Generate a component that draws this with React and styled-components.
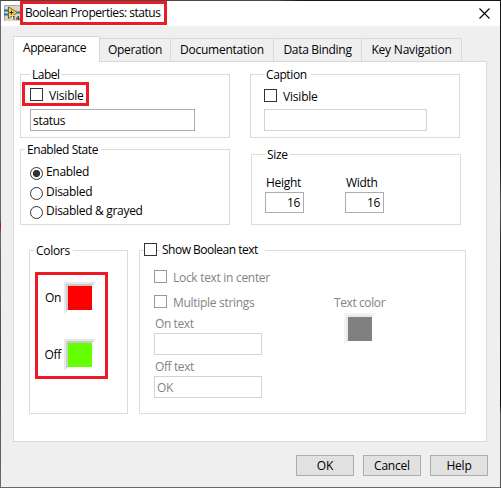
import React, { useState } from 'react';
import styled, { createGlobalStyle } from 'styled-components';

const GlobalStyle = createGlobalStyle`
  * {
    box-sizing: border-box;
  }

  body {
    margin: 0;
    font: 12px/16px "Open Sans", "Noto Sans", sans-serif;
    color: #000;
  }
`;

// the 1px padding lets the dark desktop show round the dialog
const Desktop = styled.div`
  width: 501px;
  height: 488px;
  padding: 1px;
  background:
    linear-gradient(90deg, #48484a 55%, #17171a 60%) top / 100% 1px no-repeat,
    linear-gradient(#66666a 45%, #a01818 46%, #68686b 48%, #4c4b50 72%, #68686a) left / 1px 100% no-repeat,
    linear-gradient(#17171a 33%, #555 42%, #17171a 56%, #101012 83%, #555 85%) right / 1px 100% no-repeat,
    #68686a;
`;

const Dialog = styled.div`
  height: 486px;
  background: #efefef;
`;

const TitleBar = styled.header`
  display: flex;
  align-items: flex-start;
  height: 25px;
  padding-left: 3px;
  background: #fff;
`;

const Highlight = styled.div`
  border: 3px solid #ed1c24;
`;

const TitleBox = styled(Highlight)`
  width: 147px;
  height: 24px;
  padding: 0 0 0 2px;
`;

const AppIcon = styled.svg`
  margin-top: 4px;
  flex: none;
`;

const CloseButton = styled.button`
  margin: 7px 10px 0 auto;
  padding: 0;
  border: 0;
  background: none;
  line-height: 0;
`;

const Text = styled.span`
  display: block;
  height: 16px;
  line-height: 18px;
  white-space: nowrap;
  letter-spacing: ${({ $ls }) => $ls || -0.3}px;
  color: ${({ $muted }) => ($muted ? '#838383' : 'inherit')};
`;

const TabList = styled.nav`
  display: flex;
  align-items: flex-end;
  margin: 10px 0 0 12px;
  height: 25px;
`;

const Tab = styled.button`
  display: flex;
  justify-content: center;
  align-items: flex-start;
  width: ${({ $width }) => $width}px;
  height: 23px;
  padding: 2px 0 0;
  border: solid #d9d9d9;
  border-width: 1px 1px 0 0;
  background: #efefef;
  font: inherit;
  color: inherit;

  &.active {
    position: relative;
    height: 26px;
    margin-bottom: -1px;
    padding-right: 4px;
    border-left-width: 1px;
    background: #fff;
  }
`;

const Pane = styled.main`
  width: 474px;
  height: 381px;
  margin-left: 12px;
  border: 1px solid #d9d9d9;
  background: #fff;
`;

const GroupRow = styled.div`
  display: flex;
  align-items: flex-start;
  gap: ${({ $gap }) => $gap}px;
  margin-top: ${({ $top }) => $top}px;
  padding-left: ${({ $left }) => $left}px;
`;

const Group = styled.section`
  width: ${({ $width }) => $width}px;
  height: ${({ $height }) => $height}px;
  margin-top: ${({ $top }) => $top || 0}px;
  border: 1px solid #dcdcdc;
`;

const Legend = styled.div`
  width: ${({ $width }) => $width}px;
  height: 16px;
  margin: -9px 0 0 ${({ $left }) => $left}px;
  padding-left: 2px;
  background: #fff;
`;

const CheckRow = styled.label`
  display: flex;
  gap: ${({ $gap }) => $gap || 6}px;
  height: 16px;
`;

const CheckBox = styled.input.attrs({ type: 'checkbox' })`
  appearance: none;
  flex: none;
  width: 13px;
  height: 13px;
  margin: 1px 0 0;
  border: 1px solid #333;
  background: #fff;

  &:disabled {
    border-color: #999;
  }
`;

const Radio = styled.input.attrs({ type: 'radio' })`
  appearance: none;
  flex: none;
  width: 13px;
  height: 13px;
  margin: 4px 0 0;
  border: 1px solid #333;
  border-radius: 50%;

  &:checked {
    background: radial-gradient(circle, #333 3.2px, #fff 4px);
  }
`;

const RadioRow = styled.label`
  display: flex;
  gap: 3px;
  height: ${({ $height }) => $height}px;
`;

const RadioList = styled.div`
  padding: 6px 0 0 9px;
`;

const Input = styled.input`
  display: block;
  width: ${({ $width }) => $width}px;
  height: ${({ $height }) => $height || 22}px;
  padding: 0 3px 0 2px;
  border: 1px solid #abadb3;
  background: #fff;
  font: inherit;
  letter-spacing: -0.3px;
  text-align: ${({ $align }) => $align || 'left'};
  color: #000;

  &:disabled {
    border-color: #d4d4d7;
    color: #838383;
  }
`;

const LabelBox = styled(Highlight)`
  width: 67px;
  height: 24px;
  margin: 0 0 3px 1px;
  padding: 2px 0 0 5px;
`;

const Indent = styled.div`
  padding: ${({ $top }) => $top || 0}px 0 0 ${({ $left }) => $left}px;
`;

const CaptionFields = styled.div`
  display: grid;
  gap: 5px;
  padding: 6px 0 0 13px;
`;

const SizeFields = styled.div`
  display: flex;
  gap: 41px;
  padding: 12px 0 0 13px;
`;

const SizeField = styled.label`
  display: grid;
  gap: 2px;

  ${Text} {
    padding-left: 1px;
  }
`;

const ColorsBox = styled(Highlight)`
  display: grid;
  align-content: start;
  gap: 25px;
  width: 73px;
  height: 107px;
  margin: 14px 0 0 5px;
  padding-top: 7px;
`;

const ColorRow = styled.div`
  display: grid;
  grid-template-columns: 23px 32px;
  gap: 3px;

  ${Text} {
    margin-top: 7px;
    text-align: right;
  }
`;

// sunken frame: a light outer ring and a darker inner one, lit from the lower right
const Swatch = styled.div`
  width: 32px;
  height: 32px;
  margin: ${({ $inset }) => $inset || '0'};
  border: 2px solid #fff;
  border-top-color: ${({ $soft }) => ($soft ? '#f3f3f3' : '#e6e6e6')};
  border-left-color: ${({ $soft }) => ($soft ? '#f3f3f3' : '#e9e9e9')};

  &::before {
    content: '';
    display: block;
    width: 24px;
    height: 24px;
    border: 2px solid #fff;
    border-top-color: ${({ $soft }) => ($soft ? '#e9e9e9' : '#cacaca')};
    border-left-color: ${({ $soft }) => ($soft ? '#e9e9e9' : '#cecece')};
    background: ${({ $color }) => $color} padding-box;
  }
`;

const BooleanHeader = styled(CheckRow)`
  gap: 3px;
  margin: -10px 0 0 4px;

  ${CheckBox} {
    margin-top: 2px;
  }

  ${Text} {
    width: 105px;
    padding-left: 2px;
    background: #fff;
  }
`;

const BooleanFields = styled.div`
  display: grid;
  grid-template-columns: 180px 1fr;
  padding: 12px 0 0 14px;
`;

const StringField = styled.label`
  display: grid;
  gap: 2px;
  margin-top: ${({ $top }) => $top}px;

  ${Text} {
    padding-left: 1px;
  }
`;

const Footer = styled.footer`
  display: flex;
  justify-content: flex-end;
  gap: 9px;
  padding: 13px 12px 0 0;
`;

const Button = styled.button`
  width: 58px;
  height: 21px;
  padding: 0;
  border: 1px solid #adadad;
  background: #e1e1e1;
  font: inherit;
  line-height: 19px;
  letter-spacing: -0.2px;
  color: inherit;
`;

const tabs = [
  { name: 'Appearance', width: 87, ls: -0.4 },
  { name: 'Operation', width: 71, ls: -0.3 },
  { name: 'Documentation', width: 103, ls: -0.25 },
  { name: 'Data Binding', width: 88, ls: -0.3 },
  { name: 'Key Navigation', width: 100, ls: -0.2 },
];

const states = [
  { name: 'Enabled', height: 20 },
  { name: 'Disabled', height: 19 },
  { name: 'Disabled & grayed', height: 19 },
];

const App = () => {
  const [tab, setTab] = useState('Appearance');
  const [enabledState, setEnabledState] = useState('Enabled');

  return (
    <Desktop>
      <GlobalStyle />
      <Dialog>
        <TitleBar>
          <AppIcon width="16" height="16" viewBox="0 0 16 16">
            <path d="M0 0h16v16H0z" fill="#d8d5cc" />
            <path d="M.5 16V.5H16" fill="none" stroke="#aaa" />
            <path d="M0 5.5h5M0 9.5h5M12 7.5h4" stroke="#1875b0" strokeWidth="1.8" />
            <path d="M4.5 2v11.5L13.5 7.5z" fill="#f8d34b" stroke="#7c6420" />
            <path d="M5.5 7.5h4M7.5 5.5v4" stroke="#222" />
            <path d="M8 10h8v6H8z" fill="#d8d5cc" />
            <path d="M9 12l1-1v4M14.5 15v-4l-2.5 3h4" fill="none" stroke="#333" strokeWidth=".9" />
          </AppIcon>
          <TitleBox>
            <Text $ls={-0.46}>Boolean Properties: status</Text>
          </TitleBox>
          <CloseButton aria-label="Close">
            <svg width="11" height="11" viewBox="0 0 11 11">
              <path d="M.5 .5l10 10M10.5 .5l-10 10" stroke="#000" strokeWidth="1.1" />
            </svg>
          </CloseButton>
        </TitleBar>

        <TabList>
          {tabs.map(({ name, width, ls }) => (
            <Tab
              key={name}
              $width={width}
              className={name === tab ? 'active' : ''}
              onClick={() => setTab(name)}
            >
              <Text $ls={ls}>{name}</Text>
            </Tab>
          ))}
        </TabList>

        <Pane>
          <GroupRow $top={12} $left={6} $gap={20}>
            <Group $width={210} $height={64}>
              <Legend $left={9} $width={31}><Text $ls={-0.5}>Label</Text></Legend>
              <LabelBox>
                <CheckRow>
                  <CheckBox />
                  <Text $ls={-0.2}>Visible</Text>
                </CheckRow>
              </LabelBox>
              <Indent $left={9}>
                <Input $width={165} defaultValue="status" />
              </Indent>
            </Group>
            <Group $width={210} $height={64}>
              <Legend $left={13} $width={47}><Text $ls={-0.4}>Caption</Text></Legend>
              <CaptionFields>
                <CheckRow>
                  <CheckBox />
                  <Text $ls={-0.2}>Visible</Text>
                </CheckRow>
                <Input $width={163} disabled />
              </CaptionFields>
            </Group>
          </GroupRow>

          <GroupRow $top={11} $left={6} $gap={21}>
            <Group $width={210} $height={76}>
              <Legend $left={4} $width={76}><Text $ls={-0.45}>Enabled State</Text></Legend>
              <RadioList>
                {states.map(({ name, height }) => (
                  <RadioRow key={name} $height={height}>
                    <Radio
                      name="state"
                      checked={enabledState === name}
                      onChange={() => setEnabledState(name)}
                    />
                    <Text>{name}</Text>
                  </RadioRow>
                ))}
              </RadioList>
            </Group>
            <Group $width={210} $height={71} $top={5}>
              <Legend $left={13} $width={25}><Text>Size</Text></Legend>
              <SizeFields>
                <SizeField>
                  <Text>Height</Text>
                  <Input $width={39} $height={21} $align="right" defaultValue="16" />
                </SizeField>
                <SizeField>
                  <Text>Width</Text>
                  <Input $width={39} $height={21} $align="right" defaultValue="16" />
                </SizeField>
              </SizeFields>
            </Group>
          </GroupRow>

          <GroupRow $top={25} $left={15} $gap={11}>
            <Group $width={99} $height={164}>
              <Legend $left={4} $width={39}><Text>Colors</Text></Legend>
              <ColorsBox>
                <ColorRow>
                  <Text>On</Text>
                  <Swatch $color="#ff0000" />
                </ColorRow>
                <ColorRow>
                  <Text>Off</Text>
                  <Swatch $color="#66ff00" />
                </ColorRow>
              </ColorsBox>
            </Group>
            <Group $width={327} $height={164}>
              <BooleanHeader>
                <CheckBox />
                <Text $ls={-0.5}>Show Boolean text</Text>
              </BooleanHeader>
              <BooleanFields>
                <div>
                  <CheckRow>
                    <CheckBox disabled />
                    <Text $muted>Lock text in center</Text>
                  </CheckRow>
                  <Indent $top={9} $left={0}>
                    <CheckRow>
                      <CheckBox disabled />
                      <Text $muted>Multiple strings</Text>
                    </CheckRow>
                  </Indent>
                  <StringField $top={5}>
                    <Text $muted $ls={-0.4}>On text</Text>
                    <Input $width={108} disabled />
                  </StringField>
                  <StringField $top={3}>
                    <Text $muted $ls={-0.4}>Off text</Text>
                    <Input $width={108} disabled defaultValue="OK" />
                  </StringField>
                </div>
                <Indent $top={25} $left={0}>
                  <Text $muted $ls={-0.4}>Text color</Text>
                  <Swatch $color="#808080" $soft $inset="3px 0 0 10px" />
                </Indent>
              </BooleanFields>
            </Group>
          </GroupRow>
        </Pane>

        <Footer>
          <Button>OK</Button>
          <Button>Cancel</Button>
          <Button>Help</Button>
        </Footer>
      </Dialog>
    </Desktop>
  );
};

export default App;
